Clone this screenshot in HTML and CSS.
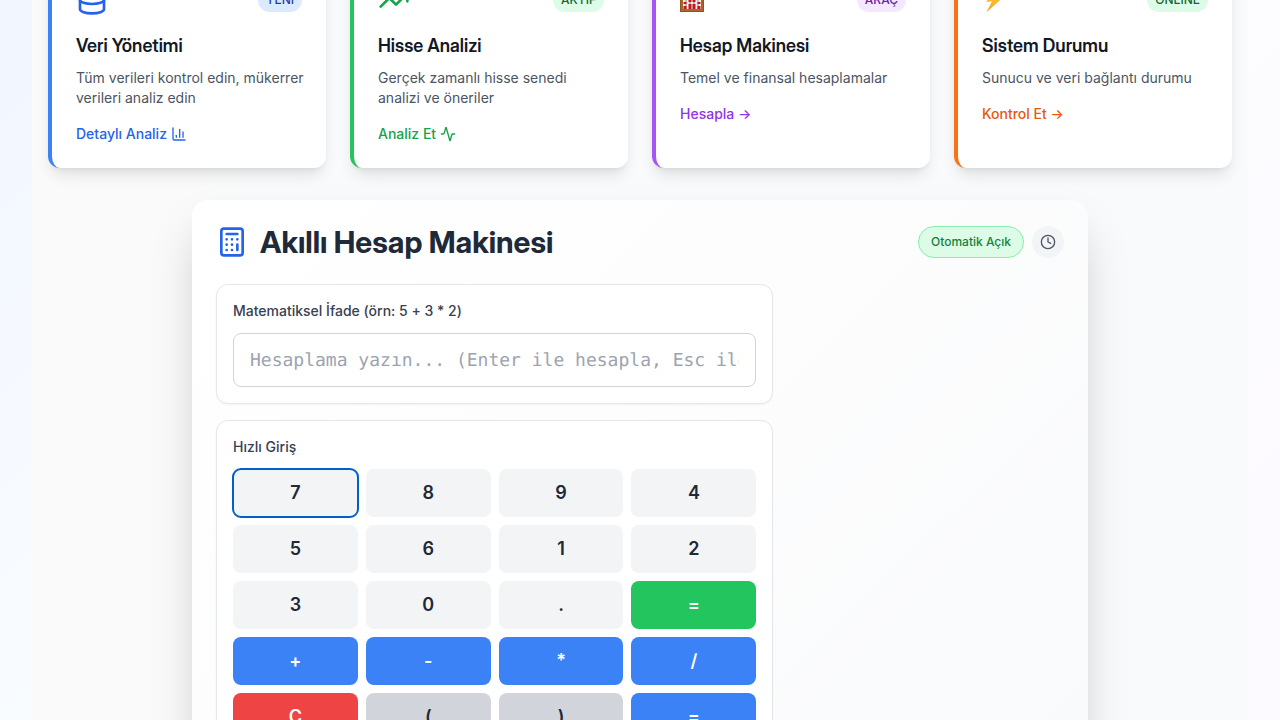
FILE: index.html
```html
<!DOCTYPE html>
<html lang="tr">
<head>
<meta charset="utf-8">
<title>Akıllı Hesap Makinesi</title>
<meta name="viewport" content="width=device-width, initial-scale=1">
<link rel="stylesheet" href="styles.css">
</head>
<body>
<main class="container">
  <section class="cards">
    <article class="card card-blue">
      <div class="card-head">
        <svg class="icon-lg" viewBox="0 0 24 24"><ellipse cx="12" cy="5" rx="9" ry="3"/><path d="M3 5V19A9 3 0 0 0 21 19V5"/><path d="M3 12A9 3 0 0 0 21 12"/></svg>
        <span class="tag">YENİ</span>
      </div>
      <h3>Veri Yönetimi</h3>
      <p>Tüm verileri kontrol edin, mükerrer verileri analiz edin</p>
      <a class="card-link" href="#veri">Detaylı Analiz <svg class="icon-sm" viewBox="0 0 24 24"><path d="M3 3v16a2 2 0 0 0 2 2h16"/><path d="M18 17V9"/><path d="M13 17V5"/><path d="M8 17v-3"/></svg></a>
    </article>
    <article class="card card-green">
      <div class="card-head">
        <svg class="icon-lg" viewBox="0 0 24 24"><path d="M22 7 13.5 15.5 8.5 10.5 2 17"/><path d="M16 7h6v6"/></svg>
        <span class="tag">AKTİF</span>
      </div>
      <h3>Hisse Analizi</h3>
      <p>Gerçek zamanlı hisse senedi analizi ve öneriler</p>
      <a class="card-link" href="#hisse">Analiz Et <svg class="icon-sm" viewBox="0 0 24 24"><path d="M22 12h-2.48a2 2 0 0 0-1.93 1.46l-2.35 8.36a.25.25 0 0 1-.48 0L9.24 2.18a.25.25 0 0 0-.48 0l-2.35 8.36A2 2 0 0 1 4.49 12H2"/></svg></a>
    </article>
    <article class="card card-purple">
      <div class="card-head">
        <svg class="picture" viewBox="0 0 24 24" role="img" aria-label="Abaküs">
          <rect width="24" height="24" fill="#8f5420"/>
          <rect x="1" y="1" width="22" height="22" fill="#a8672a"/>
          <rect x="3" y="3" width="18" height="18" fill="#f3eeee"/>
          <path d="M6 3v18M10 3v18M14 3v18M18 3v18" stroke="#9b8580" stroke-width="1"/>
          <path d="M6 4v4M10 4v2M14 4v2M18 4v4M5 14v2M5 18v3M10 12v2M14 12v2M10 16v5M14 16v5M19 14v2M19 18v3" stroke="#c4161c" stroke-width="3" stroke-linecap="butt"/>
          <path d="M3 9.500h18" stroke="#8f5420" stroke-width="1"/>
        </svg>
        <span class="tag">ARAÇ</span>
      </div>
      <h3>Hesap Makinesi</h3>
      <p>Temel ve finansal hesaplamalar</p>
      <a class="card-link" href="#hesap">Hesapla →</a>
    </article>
    <article class="card card-orange">
      <div class="card-head">
        <svg class="picture" viewBox="0 0 24 24" role="img" aria-label="Şimşek">
          <defs><linearGradient id="bolt" x1="0" y1="0" x2="0" y2="1"><stop offset="0" stop-color="#ffd93b"/><stop offset="1" stop-color="#f9a01b"/></linearGradient></defs>
          <path d="M18.500 0.500 4.500 13.500 10.500 13 5 23.500 19.500 10.500 13 11z" fill="url(#bolt)" stroke="#f2a735" stroke-width="0.500"/>
        </svg>
        <span class="tag">ONLINE</span>
      </div>
      <h3>Sistem Durumu</h3>
      <p>Sunucu ve veri bağlantı durumu</p>
      <a class="card-link" href="#sistem">Kontrol Et →</a>
    </article>
  </section>

  <section class="calculator" id="hesap">
    <header class="calc-head">
      <div class="calc-title">
        <svg class="icon-lg" viewBox="0 0 24 24"><rect x="4" y="2" width="16" height="20" rx="2"/><path d="M8 6h8M16 14v4M16 10h.01M12 10h.01M8 10h.01M12 14h.01M8 14h.01M12 18h.01M8 18h.01"/></svg>
        <h2>Akıllı Hesap Makinesi</h2>
      </div>
      <div class="calc-actions">
        <button class="auto" type="button">Otomatik Açık</button>
        <button class="history" type="button" aria-label="Geçmiş"><svg class="icon-sm" viewBox="0 0 24 24"><circle cx="12" cy="12" r="10"/><path d="M12 6v6l4 2"/></svg></button>
      </div>
    </header>
    <div class="calc-grid">
      <div class="calc-main">
        <div class="panel">
          <label class="label" for="expression">Matematiksel İfade (örn: 5 + 3 * 2)</label>
          <input class="expression" id="expression" type="text" placeholder="Hesaplama yazın... (Enter ile hesapla, Esc ile temizle)">
        </div>
        <div class="panel">
          <h3 class="label">Hızlı Giriş</h3>
          <div class="keys">
            <button class="key key-current" type="button">7</button>
            <button class="key" type="button">8</button>
            <button class="key" type="button">9</button>
            <button class="key" type="button">4</button>
            <button class="key" type="button">5</button>
            <button class="key" type="button">6</button>
            <button class="key" type="button">1</button>
            <button class="key" type="button">2</button>
            <button class="key" type="button">3</button>
            <button class="key" type="button">0</button>
            <button class="key" type="button">.</button>
            <button class="key key-equals" type="button">=</button>
            <button class="key key-op" type="button">+</button>
            <button class="key key-op" type="button">-</button>
            <button class="key key-op" type="button">*</button>
            <button class="key key-op" type="button">/</button>
            <button class="key key-clear" type="button">C</button>
            <button class="key key-paren" type="button">(</button>
            <button class="key key-paren" type="button">)</button>
            <button class="key key-op" type="button">=</button>
          </div>
        </div>
      </div>
    </div>
  </section>
</main>
</body>
</html>
```
FILE: styles.css
```css
* {
  box-sizing: border-box;
}

body {
  margin: 0;
  height: 100vh;
  overflow: hidden;
  font-family: "Inter Variable", Inter, "Noto Sans", sans-serif;
  font-size: 14px;
  line-height: 20px;
  font-variant-ligatures: no-contextual;
  color: #111827;
  background: linear-gradient(135deg, #f1f6ff, #fcfeff 50%, #fcf9ff);
}

h2, h3, p {
  margin: 0;
}

button, input {
  font: inherit;
  color: inherit;
  border: 0;
}

button {
  padding: 0;
  cursor: pointer;
}

svg {
  fill: none;
  stroke: currentColor;
  stroke-width: 2;
  stroke-linecap: round;
  stroke-linejoin: round;
}

.icon-lg {
  width: 32px;
  height: 32px;
}

.icon-sm {
  width: 16px;
  height: 16px;
}

.picture {
  width: 24px;
  height: 24px;
  stroke: none;
}

.container {
  margin: 0 32px;
  padding: 0 16px;
  background: linear-gradient(90deg, #fafafa, #f8fafc 50%);
  display: flow-root;
}

/* The card row is scrolled partly out of view. */
.cards {
  display: grid;
  grid-template-columns: repeat(4, 1fr);
  gap: 24px;
  margin: -40px 0 32px;
}

.card {
  padding: 24px 20px 24px 24px;
  background: #ffffff;
  border-left: 4px solid var(--edge);
  border-radius: 12px;
  box-shadow: 0 10px 15px -3px rgba(0, 0, 0, 0.1), 0 4px 6px -4px rgba(0, 0, 0, 0.1);
}

.card-blue { --edge: #3b82f6; --accent: #2563eb; --tag-bg: #dbeafe; --tag-text: #1e40af; }
.card-green { --edge: #22c55e; --accent: #16a34a; --tag-bg: #dcfce7; --tag-text: #166534; }
.card-purple { --edge: #a855f7; --accent: #9333ea; --tag-bg: #f3e8ff; --tag-text: #6b21a8; }
.card-orange { --edge: #f97316; --accent: #ea580c; --tag-bg: #dcfce7; --tag-text: #166534; }

.card-head {
  display: flex;
  align-items: center;
  justify-content: space-between;
  height: 32px;
  margin: 0 4px 16px 0;
  color: var(--accent);
}

.tag {
  padding: 4px 8px;
  border-radius: 12px;
  background: var(--tag-bg);
  color: var(--tag-text);
  font-size: 12px;
  line-height: 16px;
  font-weight: 500;
}

.card h3 {
  margin-bottom: 8px;
  font-family: "Inter Display", Inter, sans-serif;
  font-size: 18px;
  line-height: 28px;
  font-weight: 600;
}

.card p {
  margin-bottom: 16px;
  color: #4b5563;
}

.card-link {
  display: flex;
  align-items: center;
  gap: 4px;
  color: var(--accent);
  font-weight: 500;
  text-decoration: none;
}

.calculator {
  max-width: 896px;
  margin: 0 auto;
  padding: 24px;
  border-radius: 16px;
  background: linear-gradient(135deg, #ffffff, #f9fafb);
  box-shadow: 0 25px 50px -12px rgba(0, 0, 0, 0.25);
}

.calc-head, .calc-title, .calc-actions {
  display: flex;
  align-items: center;
}

.calc-head {
  justify-content: space-between;
  margin-bottom: 24px;
}

.calc-title {
  gap: 12px;
  color: #2563eb;
}

.calc-title h2 {
  font-family: "Inter Display", Inter, sans-serif;
  font-size: 30px;
  line-height: 36px;
  font-weight: 700;
  color: #1f2937;
}

.calc-actions {
  gap: 8px;
}

.auto {
  height: 32px;
  padding: 0 12px;
  border: 1px solid #86efac;
  border-radius: 16px;
  background: #dcfce7;
  color: #15803d;
  font-size: 12px;
  font-weight: 500;
}

.history {
  display: grid;
  place-items: center;
  width: 32px;
  height: 32px;
  border-radius: 50%;
  background: #f3f4f6;
  color: #4b5563;
}

.calc-grid {
  display: grid;
  grid-template-columns: repeat(3, 1fr);
  gap: 24px;
}

.calc-main {
  grid-column: span 2;
  display: grid;
  gap: 16px;
}

.panel {
  padding: 16px;
  border: 1px solid #e5e7eb;
  border-radius: 12px;
  background: #ffffff;
  box-shadow: 0 1px 2px rgba(0, 0, 0, 0.05);
}

.label {
  display: block;
  margin-bottom: 12px;
  font-size: 14px;
  line-height: 20px;
  font-weight: 500;
  color: #374151;
}

.expression {
  display: block;
  width: 100%;
  height: 54px;
  padding: 12px 16px;
  border: 1px solid #d1d5db;
  border-radius: 8px;
  background: #ffffff;
  font-family: "DejaVu Sans Mono", monospace;
  font-size: 18px;
  line-height: 28px;
  text-rendering: geometricPrecision;
}

.expression::placeholder {
  color: #9ca3af;
}

.keys {
  display: grid;
  grid-template-columns: repeat(4, 1fr);
  gap: 8px;
}

.key {
  height: 48px;
  border-radius: 8px;
  background: #f3f4f6;
  color: #1f2937;
  font-size: 18px;
  line-height: 28px;
  font-weight: 600;
}

.key-current {
  outline: 2px solid #005fcc;
  outline-offset: -1px;
}

.key-op { background: #3b82f6; color: #ffffff; }
.key-equals { background: #22c55e; color: #ffffff; }
.key-clear { background: #ef4444; color: #ffffff; }
.key-paren { background: #d1d5db; }
```
